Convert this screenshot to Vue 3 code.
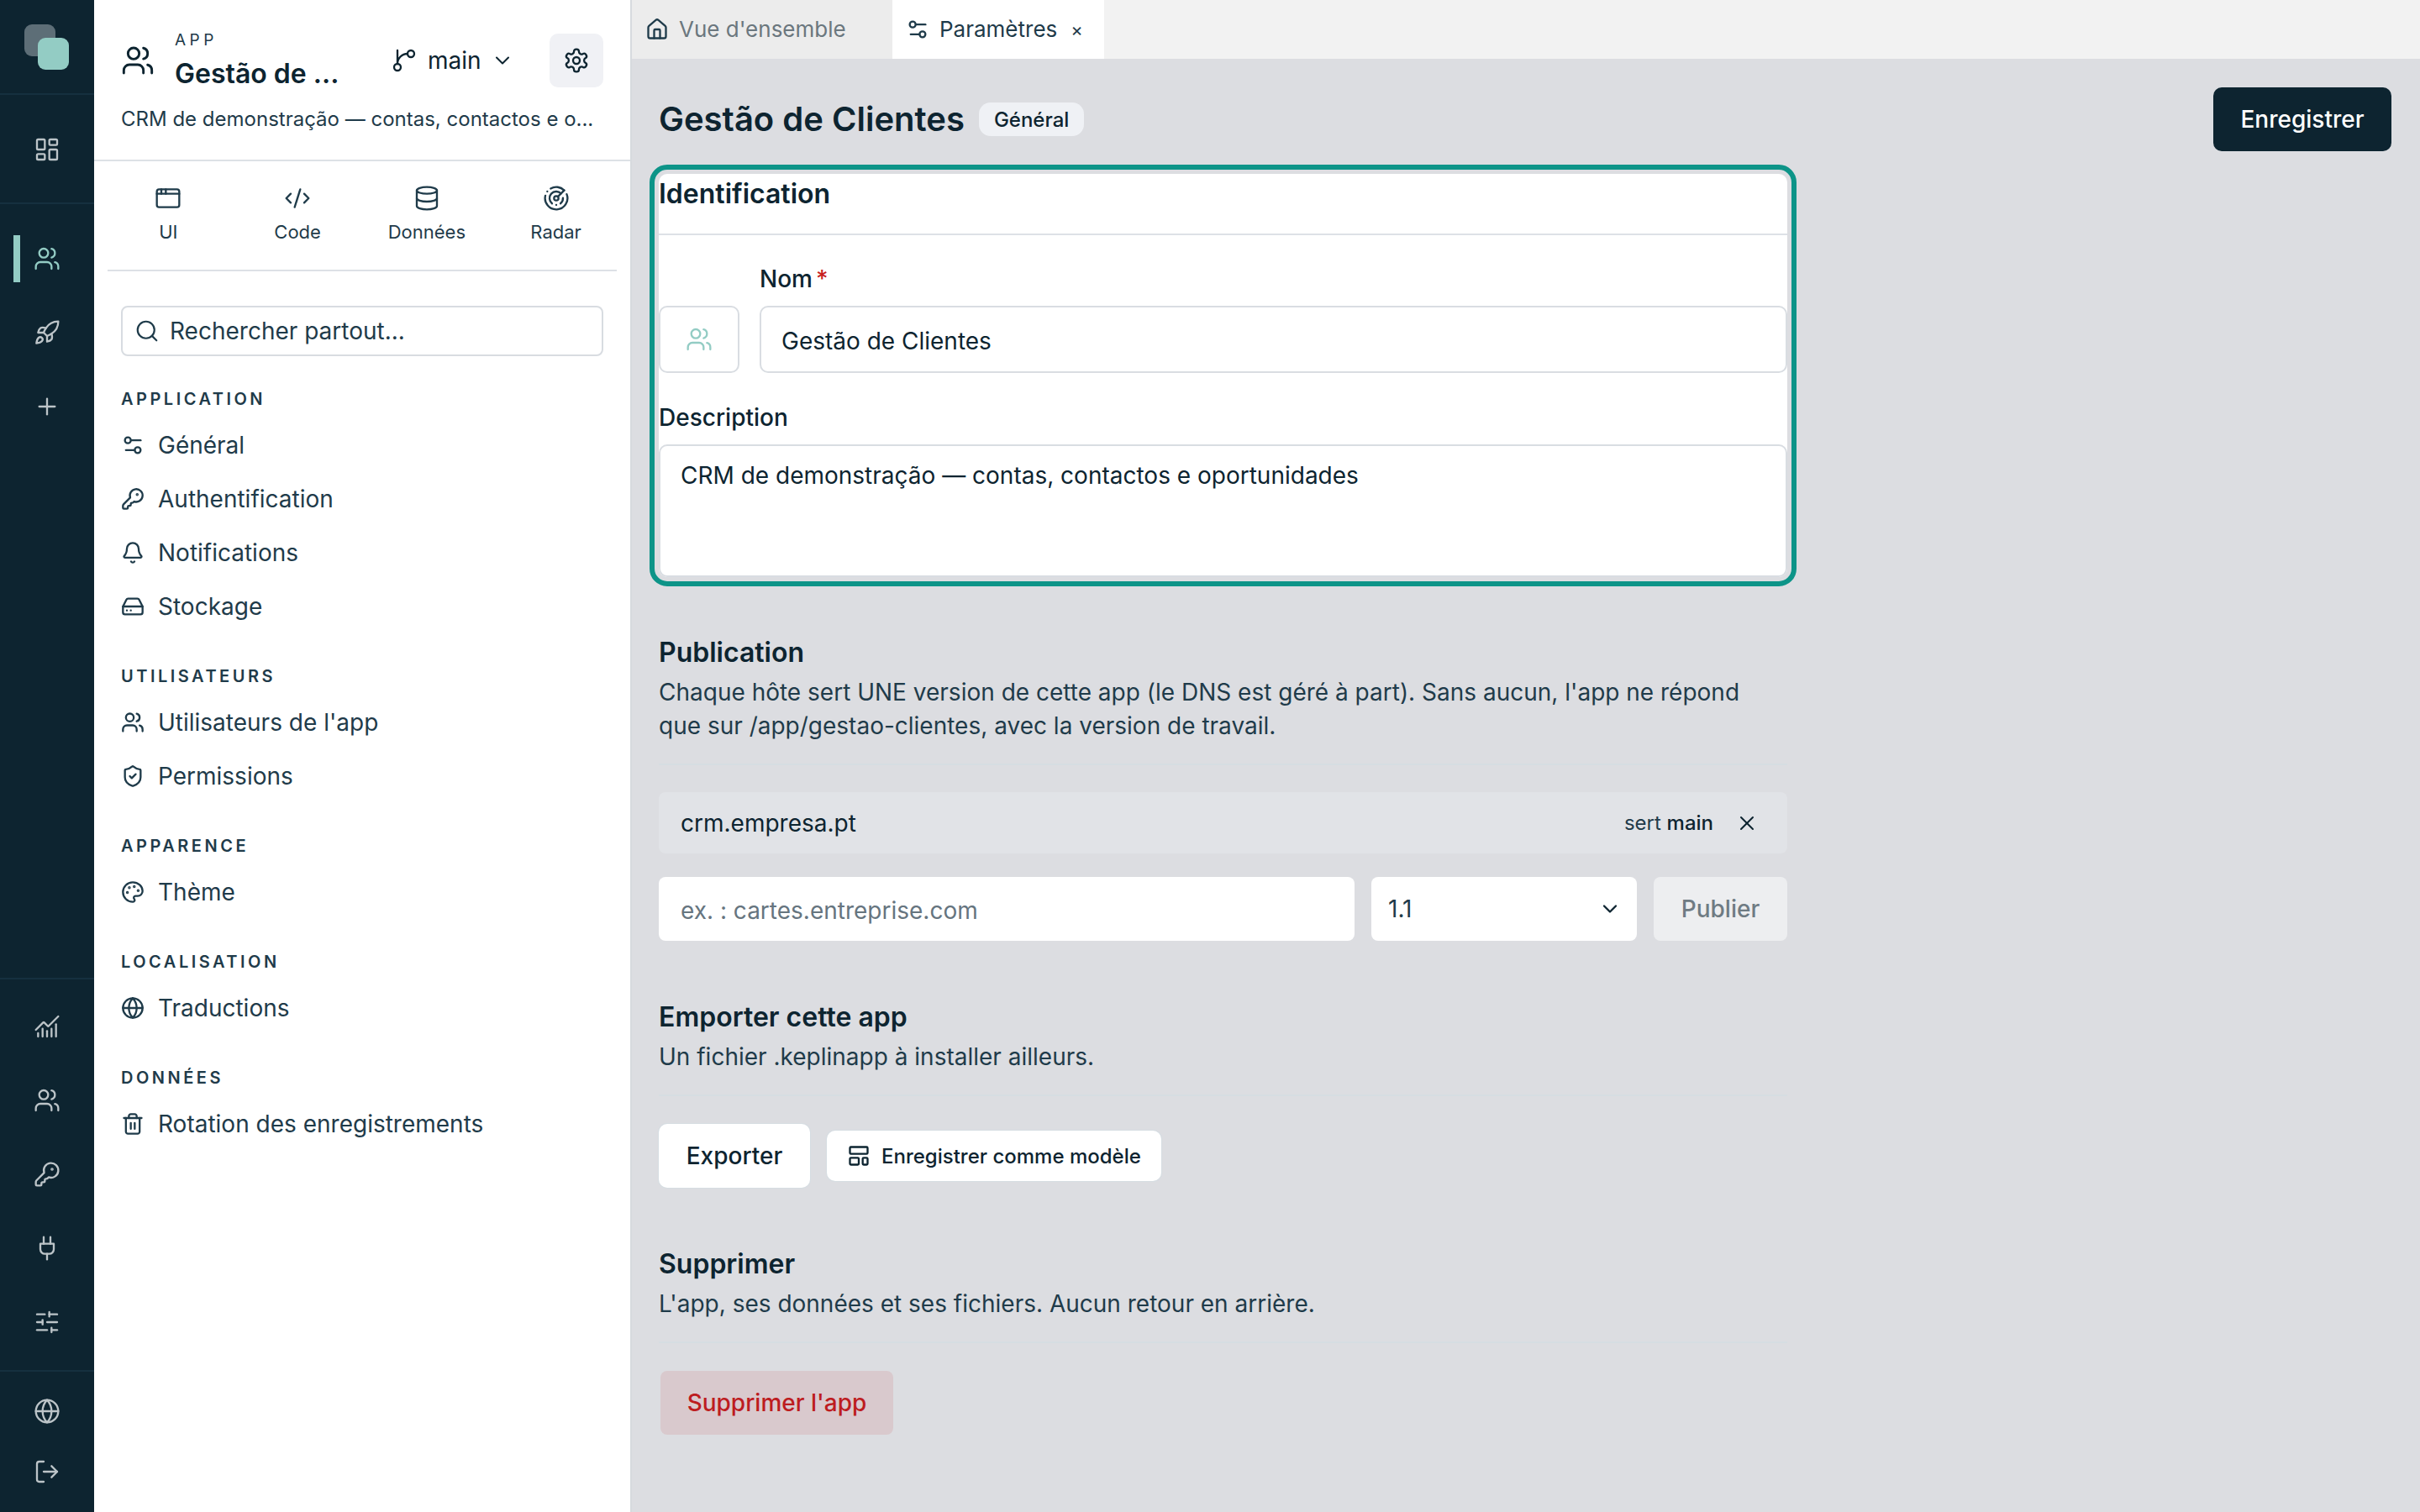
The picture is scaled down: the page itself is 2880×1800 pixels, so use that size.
<script setup>
const P = {
  users: '<path d="M16 21v-2a4 4 0 0 0-4-4H6a4 4 0 0 0-4 4v2"/><circle cx="9" cy="7" r="4"/><path d="M22 21v-2a4 4 0 0 0-3-3.87"/><path d="M16 3.13a4 4 0 0 1 0 7.75"/>',
  dash: '<rect width="7" height="9" x="3" y="3" rx="1"/><rect width="7" height="5" x="14" y="3" rx="1"/><rect width="7" height="9" x="14" y="12" rx="1"/><rect width="7" height="5" x="3" y="16" rx="1"/>',
  rocket: '<path d="M4.5 16.5c-1.5 1.26-2 5-2 5s3.74-.5 5-2c.71-.84.7-2.13-.09-2.91a2.18 2.18 0 0 0-2.91-.09z"/><path d="m12 15-3-3a22 22 0 0 1 2-3.95A12.88 12.88 0 0 1 22 2c0 2.72-.78 7.5-6 11a22.35 22.35 0 0 1-4 2z"/><path d="M9 12H4s.55-3.03 2-4c1.62-1.08 5 0 5 0"/><path d="M12 15v5s3.03-.55 4-2c1.08-1.62 0-5 0-5"/>',
  plus: '<path d="M5 12h14"/><path d="M12 5v14"/>',
  chart: '<path d="M12 16v5"/><path d="M16 14v7"/><path d="M20 10v11"/><path d="m22 3-8.646 8.646a.5.5 0 0 1-.708 0L9.354 8.354a.5.5 0 0 0-.707 0L2 15"/><path d="M4 18v3"/><path d="M8 14v7"/>',
  key: '<path d="M2.586 17.414A2 2 0 0 0 2 18.828V21a1 1 0 0 0 1 1h3a1 1 0 0 0 1-1v-1a1 1 0 0 1 1-1h1a1 1 0 0 0 1-1v-1a1 1 0 0 1 1-1h.172a2 2 0 0 0 1.414-.586l.814-.814a6.5 6.5 0 1 0-4-4z"/><circle cx="16.5" cy="7.5" r=".5" fill="currentColor"/>',
  plug: '<path d="M12 22v-5"/><path d="M9 8V2"/><path d="M15 8V2"/><path d="M18 8v5a4 4 0 0 1-4 4h-4a4 4 0 0 1-4-4V8Z"/>',
  sliders: '<path d="M10 5H3"/><path d="M12 19H3"/><path d="M14 3v4"/><path d="M16 17v4"/><path d="M21 12h-9"/><path d="M21 19h-5"/><path d="M21 5h-7"/><path d="M8 10v4"/><path d="M8 12H3"/>',
  globe: '<circle cx="12" cy="12" r="10"/><path d="M12 2a14.5 14.5 0 0 0 0 20 14.5 14.5 0 0 0 0-20"/><path d="M2 12h20"/>',
  logout: '<path d="m16 17 5-5-5-5"/><path d="M21 12H9"/><path d="M9 21H5a2 2 0 0 1-2-2V5a2 2 0 0 1 2-2h4"/>',
  branch: '<path d="M15 6a9 9 0 0 0-9 9V3"/><circle cx="18" cy="6" r="3"/><circle cx="6" cy="18" r="3"/>',
  chevron: '<path d="m6 9 6 6 6-6"/>',
  gear: '<path d="M12.22 2h-.44a2 2 0 0 0-2 2v.18a2 2 0 0 1-1 1.73l-.43.25a2 2 0 0 1-2 0l-.15-.08a2 2 0 0 0-2.73.73l-.22.38a2 2 0 0 0 .73 2.73l.15.1a2 2 0 0 1 1 1.72v.51a2 2 0 0 1-1 1.74l-.15.09a2 2 0 0 0-.73 2.73l.22.38a2 2 0 0 0 2.73.73l.15-.08a2 2 0 0 1 2 0l.43.25a2 2 0 0 1 1 1.73V20a2 2 0 0 0 2 2h.44a2 2 0 0 0 2-2v-.18a2 2 0 0 1 1-1.73l.43-.25a2 2 0 0 1 2 0l.15.08a2 2 0 0 0 2.73-.73l.22-.39a2 2 0 0 0-.73-2.73l-.15-.08a2 2 0 0 1-1-1.74v-.5a2 2 0 0 1 1-1.74l.15-.09a2 2 0 0 0 .73-2.73l-.22-.38a2 2 0 0 0-2.73-.73l-.15.08a2 2 0 0 1-2 0l-.43-.25a2 2 0 0 1-1-1.73V4a2 2 0 0 0-2-2z"/><circle cx="12" cy="12" r="3"/>',
  window: '<rect x="2" y="4" width="20" height="16" rx="2"/><path d="M10 4v4"/><path d="M2 8h20"/><path d="M6 4v4"/>',
  code: '<path d="m18 16 4-4-4-4"/><path d="m6 8-4 4 4 4"/><path d="m14.5 4-5 16"/>',
  db: '<ellipse cx="12" cy="5" rx="9" ry="3"/><path d="M3 5V19A9 3 0 0 0 21 19V5"/><path d="M3 12A9 3 0 0 0 21 12"/>',
  radar: '<path d="M19.07 4.93A10 10 0 0 0 6.99 3.34"/><path d="M4 6h.01"/><path d="M2.29 9.62A10 10 0 1 0 21.31 8.35"/><path d="M16.24 7.76A6 6 0 1 0 8.23 16.67"/><path d="M12 18h.01"/><path d="M17.99 11.66A6 6 0 0 1 15.77 16.67"/><circle cx="12" cy="12" r="2"/><path d="m13.41 10.59 5.66-5.66"/>',
  search: '<circle cx="11" cy="11" r="8"/><path d="m21 21-4.3-4.3"/>',
  settings2: '<path d="M20 7h-9"/><path d="M14 17H5"/><circle cx="17" cy="17" r="3"/><circle cx="7" cy="7" r="3"/>',
  bell: '<path d="M10.268 21a2 2 0 0 0 3.464 0"/><path d="M3.262 15.326A1 1 0 0 0 4 17h16a1 1 0 0 0 .74-1.673C19.41 13.956 18 12.499 18 8A6 6 0 0 0 6 8c0 4.499-1.411 5.956-2.738 7.326"/>',
  drive: '<path d="M22 12H2"/><path d="M5.45 5.11 2 12v6a2 2 0 0 0 2 2h16a2 2 0 0 0 2-2v-6l-3.45-6.89A2 2 0 0 0 16.76 4H7.24a2 2 0 0 0-1.79 1.11z"/><path d="M6 16h.01"/><path d="M10 16h.01"/>',
  shield: '<path d="M20 13c0 5-3.5 7.5-7.66 8.95a1 1 0 0 1-.67-.01C7.5 20.5 4 18 4 13V6a1 1 0 0 1 1-1c2 0 4.5-1.2 6.24-2.72a1.17 1.17 0 0 1 1.52 0C14.51 3.81 17 5 19 5a1 1 0 0 1 1 1z"/><path d="m9 12 2 2 4-4"/>',
  palette: '<path d="M12 22a1 1 0 0 1 0-20 10 9 0 0 1 10 9 5 5 0 0 1-5 5h-2.25a1.75 1.75 0 0 0-1.4 2.8l.3.4a1.75 1.75 0 0 1-1.4 2.8z"/><circle cx="13.5" cy="6.5" r=".5" fill="currentColor"/><circle cx="17.5" cy="10.5" r=".5" fill="currentColor"/><circle cx="6.5" cy="12.5" r=".5" fill="currentColor"/><circle cx="8.5" cy="7.5" r=".5" fill="currentColor"/>',
  trash: '<path d="M3 6h18"/><path d="M19 6v14c0 1-1 2-2 2H7c-1 0-2-1-2-2V6"/><path d="M8 6V4c0-1 1-2 2-2h4c1 0 2 1 2 2v2"/><path d="M10 11v6"/><path d="M14 11v6"/>',
  home: '<path d="M15 21v-8a1 1 0 0 0-1-1h-4a1 1 0 0 0-1 1v8"/><path d="M3 10a2 2 0 0 1 .709-1.528l7-5.999a2 2 0 0 1 2.582 0l7 5.999A2 2 0 0 1 21 10v9a2 2 0 0 1-2 2H5a2 2 0 0 1-2-2z"/>',
  template: '<rect width="18" height="7" x="3" y="3" rx="1"/><rect width="9" height="7" x="3" y="14" rx="1"/><rect width="5" height="7" x="16" y="14" rx="1"/>',
  x: '<path d="M18 6 6 18"/><path d="m6 6 12 12"/>'
}
const tools = [
  { i: 'window', t: 'UI' }, { i: 'code', t: 'Code' }, { i: 'db', t: 'Données' }, { i: 'radar', t: 'Radar' }
]
const groups = [
  { t: 'APPLICATION', items: [['settings2', 'Général'], ['key', 'Authentification'], ['bell', 'Notifications'], ['drive', 'Stockage']] },
  { t: 'UTILISATEURS', items: [['users', "Utilisateurs de l'app"], ['shield', 'Permissions']] },
  { t: 'APPARENCE', items: [['palette', 'Thème']] },
  { t: 'LOCALISATION', items: [['globe', 'Traductions']] },
  { t: 'DONNÉES', items: [['trash', 'Rotation des enregistrements']] }
]
</script>

<template>
  <div class="app">
    <aside class="rail">
      <div class="rail-logo">
        <span class="logo-back"></span>
        <span class="logo-front"></span>
      </div>
      <div class="rail-home">
        <svg class="ri" viewBox="0 0 24 24" v-html="P.dash"></svg>
      </div>
      <div class="rail-apps">
        <div class="rbtn active"><span class="bar"></span><svg class="ri" viewBox="0 0 24 24" v-html="P.users"></svg></div>
        <div class="rbtn"><svg class="ri" viewBox="0 0 24 24" v-html="P.rocket"></svg></div>
        <div class="rbtn"><svg class="ri" viewBox="0 0 24 24" v-html="P.plus"></svg></div>
      </div>
      <div class="rail-admin">
        <div v-for="n in ['chart','users','key','plug','sliders']" :key="n" class="rbtn"><svg class="ri" viewBox="0 0 24 24" v-html="P[n]"></svg></div>
      </div>
      <div class="rail-foot">
        <div class="fbtn"><svg class="ri" viewBox="0 0 24 24" v-html="P.globe"></svg></div>
        <div class="fbtn"><svg class="ri" viewBox="0 0 24 24" v-html="P.logout"></svg></div>
      </div>
    </aside>

    <nav class="panel">
      <header class="phead">
        <div class="phead-row">
          <svg class="app-ic" viewBox="0 0 24 24" v-html="P.users"></svg>
          <div class="app-names">
            <div class="app-kicker">APP</div>
            <div class="app-name">Gestão de ...</div>
          </div>
          <div class="branch">
            <svg class="br-ic" viewBox="0 0 24 24" v-html="P.branch"></svg>
            <span>main</span>
            <svg class="br-ch" viewBox="0 0 24 24" v-html="P.chevron"></svg>
          </div>
          <div class="gear"><svg viewBox="0 0 24 24" v-html="P.gear"></svg></div>
        </div>
        <div class="app-desc">CRM de demonstração — contas, contactos e o...</div>
      </header>

      <div class="tools">
        <div class="tools-grid">
          <div v-for="t in tools" :key="t.t" class="tool">
            <svg viewBox="0 0 24 24" v-html="P[t.i]"></svg>
            <span>{{ t.t }}</span>
          </div>
        </div>
      </div>

      <div class="psearch">
        <svg viewBox="0 0 24 24" v-html="P.search"></svg>
        <span>Rechercher partout...</span>
      </div>

      <div class="groups">
        <section v-for="g in groups" :key="g.t" class="group">
          <div class="group-t">{{ g.t }}</div>
          <div v-for="it in g.items" :key="it[1]" class="item">
            <svg viewBox="0 0 24 24" v-html="P[it[0]]"></svg>
            <span>{{ it[1] }}</span>
          </div>
        </section>
      </div>
    </nav>

    <main class="main">
      <div class="tabs">
        <div class="tab tab-off">
          <svg viewBox="0 0 24 24" v-html="P.home"></svg>
          <span>Vue d'ensemble</span>
        </div>
        <div class="tab tab-on">
          <svg viewBox="0 0 24 24" v-html="P.settings2"></svg>
          <span>Paramètres</span>
          <i class="tab-x">×</i>
        </div>
      </div>

      <div class="content">
        <div class="top">
          <h1>Gestão de Clientes</h1>
          <span class="pill">Général</span>
          <button class="save">Enregistrer</button>
        </div>

        <div class="col">
          <section class="ident">
            <h2 class="ident-t">Identification</h2>
            <div class="name-row">
              <div class="icon-box"><svg viewBox="0 0 24 24" v-html="P.users"></svg></div>
              <div class="name-f">
                <label class="lab">Nom<em>*</em></label>
                <input class="inp" value="Gestão de Clientes" />
              </div>
            </div>
            <label class="lab desc-lab">Description</label>
            <textarea class="ta">CRM de demonstração — contas, contactos e oportunidades</textarea>
          </section>

          <section class="block pub">
            <h2>Publication</h2>
            <p>Chaque hôte sert UNE version de cette app (le DNS est géré à part). Sans aucun, l'app ne répond<br />que sur /app/gestao-clientes, avec la version de travail.</p>
            <div class="host">
              <span class="host-n">crm.empresa.pt</span>
              <span class="host-s">sert <b>main</b></span>
              <svg viewBox="0 0 24 24" v-html="P.x"></svg>
            </div>
            <div class="pub-form">
              <input class="pinp" placeholder="ex. : cartes.entreprise.com" />
              <div class="psel"><span>1.1</span><svg viewBox="0 0 24 24" v-html="P.chevron"></svg></div>
              <button class="publish">Publier</button>
            </div>
          </section>

          <section class="block">
            <h2>Emporter cette app</h2>
            <p>Un fichier .keplinapp à installer ailleurs.</p>
            <div class="btns">
              <button class="btn">Exporter</button>
              <button class="btn-sm"><svg viewBox="0 0 24 24" v-html="P.template"></svg>Enregistrer comme modèle</button>
            </div>
          </section>

          <section class="block">
            <h2>Supprimer</h2>
            <p>L'app, ses données et ses fichiers. Aucun retour en arrière.</p>
            <div class="btns">
              <button class="danger">Supprimer l'app</button>
            </div>
          </section>
        </div>
      </div>
    </main>
  </div>
</template>

<style>
html, body { margin: 0; padding: 0; background: #dcdde1; }
</style>

<style scoped>
* { box-sizing: border-box; }
svg { fill: none; stroke: currentColor; stroke-linecap: round; stroke-linejoin: round; stroke-width: 2; flex: none; display: block; }
.app { display: flex; width: 2880px; height: 1800px; overflow: hidden; font-family: Inter, "Noto Sans", sans-serif; color: #0d2430; background: #dcdde1; }

.rail { width: 112px; flex: none; background: #0d2430; color: #bcc4c8; display: flex; flex-direction: column; }
.rail-logo { height: 113px; border-bottom: 2px solid #15303f; position: relative; flex: none; }
.logo-back, .logo-front { position: absolute; width: 37px; height: 38px; border-radius: 9px; }
.logo-back { left: 29px; top: 29px; background: #5d6e77; }
.logo-front { left: 45px; top: 45px; background: #93ccc4; }
.rail-home { height: 130px; padding-top: 2px; border-bottom: 2px solid #15303f; display: flex; align-items: center; justify-content: center; flex: none; }
.ri { width: 32px; height: 32px; stroke-width: 1.75; }
.rail-apps { padding-top: 21px; flex: 1; }
.rbtn { height: 88px; display: flex; align-items: center; justify-content: center; position: relative; }
.rbtn.active { color: #93ccc4; }
.bar { position: absolute; left: 16px; top: 16px; width: 8px; height: 56px; background: #93ccc4; }
.rail-admin { border-top: 2px solid #15303f; padding: 12px 0 13px; flex: none; }
.rail-foot { border-top: 2px solid #15303f; padding: 11px 0 12px; flex: none; }
.fbtn { height: 72px; display: flex; align-items: center; justify-content: center; }

.panel { width: 640px; flex: none; background: #fff; border-right: 2px solid #d7dade; display: flex; flex-direction: column; color: #1f3b4a; }
.phead { height: 192px; padding: 40px 32px 0 32px; border-bottom: 2px solid #dde1e6; flex: none; }
.phead-row { display: flex; align-items: center; height: 64px; }
.app-ic { width: 40px; height: 40px; margin-right: 24px; color: #0d2430; stroke-width: 1.75; }
.app-names { width: 250px; flex: none; }
.app-kicker { font-size: 19px; line-height: 24px; letter-spacing: 4.5px; color: #1f3b4a; margin-top: -4px; }
.app-name { font-size: 32px; font-weight: 600; line-height: 42px; color: #0d2430; margin-top: 7px; margin-bottom: -5px; white-space: nowrap; }
.branch { display: flex; align-items: center; font-size: 28px; color: #0d2430; flex: none; }
.br-ic { width: 32px; height: 32px; margin-right: 12px; stroke-width: 1.75; margin-left: 7px; }
.br-ch { width: 28px; height: 28px; margin-left: 11px; stroke-width: 1.75; }
.gear { width: 64px; height: 64px; border-radius: 10px; background: #f0f1f5; display: flex; align-items: center; justify-content: center; margin-left: auto; color: #0d2430; }
.gear svg { width: 32px; height: 32px; stroke-width: 1.75; }
.app-desc { margin-top: 18px; font-size: 24px; line-height: 40px; white-space: nowrap; color: #1f3b4a; }

.tools { margin: 0 16px; height: 131px; border-bottom: 2px solid #dde1e6; padding-top: 28px; flex: none; }
.tools-grid { display: grid; grid-template-columns: repeat(4, 1fr); margin: 0 -4.5px; }
.tool { display: flex; flex-direction: column; align-items: center; font-size: 22px; line-height: 30px; color: #1f3b4a; }
.tool svg { width: 32px; height: 32px; margin-bottom: 9px; color: #1f3b4a; stroke-width: 1.75; }

.psearch { margin: 41px 32px 0 32px; height: 60px; border: 2px solid #d8dce1; border-radius: 8px; display: flex; align-items: center; padding-left: 14px; font-size: 28px; color: #1f3b4a; flex: none; }
.psearch svg { width: 30px; height: 30px; margin-right: 12px; stroke-width: 1.75; }

.groups { padding: 37px 32px 0; }
.group { margin-bottom: 37px; }
.group-t { font-size: 20px; font-weight: 600; letter-spacing: 3.5px; line-height: 28px; height: 28px; margin-bottom: 9px; color: #1f3b4a; }
.item { height: 64px; display: flex; align-items: center; font-size: 28px; white-space: nowrap; gap: 16px; color: #1f3b4a; }
.item svg { width: 28px; height: 28px; }

.main { flex: 1; min-width: 0; display: flex; flex-direction: column; }
.tabs { height: 70px; background: #f2f2f2; display: flex; flex: none; }
.tab { display: flex; align-items: center; font-size: 26px; white-space: nowrap; padding-bottom: 1px; }
.tab svg { width: 28px; height: 28px; margin-right: 12px; }
.tab-off { width: 310px; padding-left: 16px; background: #ececec; color: #6b777e; }
.tab-off svg { color: #1f3b4a; }
.tab-on { width: 252px; padding-left: 16px; background: #fff; color: #1f3b4a; }
.tab-x { font-style: normal; font-size: 22px; margin-left: 16px; }

.content { padding: 34px 34px 0 32px; }
.top { display: flex; align-items: center; height: 76px; }
h1 { margin: 0; font-size: 40px; font-weight: 600; color: #0d2430; line-height: 50px; }
.pill { margin-left: 17px; height: 40px; padding: 0 18px; border-radius: 14px; background: #eff1f5; font-size: 24px; font-weight: 500; display: flex; align-items: center; color: #0d2430; }
.save { margin-left: auto; width: 212px; height: 76px; border: 0; border-radius: 10px; background: #0d2430; color: #fff; font: 500 28px Inter, sans-serif; }

.col { width: 1343px; }
.ident { margin-top: 27px; background: #fff; border-radius: 10px; outline: 6px solid #0d9488; outline-offset: 5px; }
.ident-t { margin: 0; height: 73px; line-height: 48px; font-size: 32px; font-weight: 600; border-bottom: 2px solid #dde1e6; color: #0d2430; }
.name-row { display: flex; align-items: flex-end; gap: 24px; padding-top: 35px; }
.icon-box { width: 96px; height: 80px; border: 2px solid #d9dde2; border-radius: 10px; display: flex; align-items: center; justify-content: center; color: #93ccc4; }
.icon-box svg { width: 32px; height: 32px; stroke-width: 1.75; }
.name-f { flex: 1; }
.lab { display: block; font-size: 28px; font-weight: 500; line-height: 34px; color: #0d2430; margin-bottom: 15px; }
.lab em { color: #c81e1e; font-style: normal; margin-left: 4px; }
.inp { display: block; width: 100%; height: 80px; border: 2px solid #d9dde2; border-radius: 10px; padding: 4px 24px 0; font: 400 28px Inter, sans-serif; color: #0d2430; background: #fff; outline: 0; }
.desc-lab { margin-top: 36px; }
.ta { display: block; width: 100%; height: 158px; border: 2px solid #d9dde2; border-radius: 10px; padding: 17px 24px; font: 400 28px/36px Inter, sans-serif; color: #0d2430; resize: none; background: #fff; outline: 0; }

.block { margin-top: 67px; }
.block.pub { margin-top: 66px; }
.block h2 { margin: 0; font-size: 32px; font-weight: 600; line-height: 48px; color: #0d2430; }
.block p { margin: 3px 0 0; font-size: 28px; line-height: 40px; color: #1f3b4a; padding-bottom: 25px; border-bottom: 2px solid #d6dde2; white-space: nowrap; }
.host { margin-top: 32px; height: 73px; border-radius: 8px; background: #e1e3e7; display: flex; align-items: center; padding: 0 34px 0 26px; }
.host-n { font-size: 28px; color: #0d2430; flex: 1; }
.host-s { font-size: 24px; color: #1f3b4a; margin-right: 26px; }
.host-s b { font-weight: 500; color: #0d2430; }
.host svg { width: 28px; height: 28px; color: #0d2430; stroke-width: 1.75; }
.pub-form { display: flex; gap: 20px; margin-top: 28px; height: 76px; }
.pinp { width: 828px; height: 76px; border: 0; border-radius: 8px; background: #fff; padding: 4px 26px 0; font: 400 28px Inter, sans-serif; color: #0d2430; outline: 0; }
.pinp::placeholder { color: #66757f; opacity: 1; }
.psel { width: 316px; height: 76px; border-radius: 8px; background: #fff; display: flex; align-items: center; justify-content: space-between; padding: 0 18px 0 20px; font-size: 28px; color: #1f3b4a; }
.psel svg { width: 28px; height: 28px; color: #0d2430; }
.publish { width: 159px; height: 76px; border: 0; border-radius: 8px; background: #edeef0; color: #6f7b83; font: 500 28px Inter, sans-serif; }
.btns { display: flex; align-items: center; gap: 20px; margin-top: 33px; }
.btn { width: 180px; height: 76px; border: 0; border-radius: 10px; background: #fff; color: #0d2430; font: 500 28px Inter, sans-serif; box-shadow: 0 0 0 1px #d6dde2; }
.btn-sm { width: 398px; height: 60px; border: 0; border-radius: 10px; background: #fff; color: #0d2430; font: 500 24px Inter, sans-serif; display: flex; align-items: center; padding-left: 24px; gap: 13px; box-shadow: 0 0 0 1px #d6dde2; white-space: nowrap; }
.btn-sm svg { width: 28px; height: 28px; }
.danger { margin-left: 2px; width: 277px; height: 76px; border: 0; border-radius: 8px; background: #d9c9cd; color: #bd1c1f; font: 500 28px Inter, sans-serif; }
</style>
